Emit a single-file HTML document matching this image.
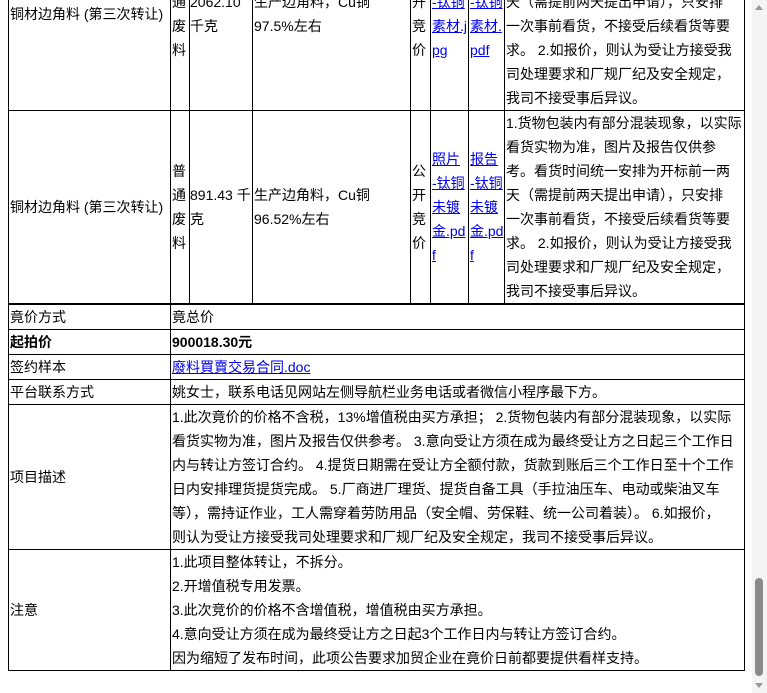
<!DOCTYPE html>
<html><head><meta charset="utf-8"><style>
html,body{margin:0;padding:0;background:#fff;overflow:hidden;width:767px;height:693px;position:relative}
body{font-family:"Liberation Sans","Noto Sans CJK SC",sans-serif;font-size:14px;color:#000}
table{border-collapse:collapse;table-layout:fixed;position:absolute;left:8px}
td{border:1px solid #000;padding:0 1px;line-height:24px;vertical-align:middle;overflow:hidden}
a{color:#00e;text-decoration:underline}
#t1{top:-83px;width:736px}
#t2{top:304px;width:736px}
.nw{white-space:nowrap;padding:0}
.sb{position:absolute;right:0;top:0;width:15px;height:693px;background:#f4f4f4}
.thumb{position:absolute;left:3px;top:578px;width:8px;height:98px;background:#8a8a8a;border-radius:4px}
.up{position:absolute;left:3px;top:5px;width:0;height:0;border-left:4px solid transparent;border-right:4px solid transparent;border-bottom:5px solid #999}
.dn{position:absolute;left:3px;top:683px;width:0;height:0;border-left:4px solid transparent;border-right:4px solid transparent;border-top:5px solid #999}
</style></head><body>
<table id="t1">
<colgroup><col style="width:162px"><col style="width:19px"><col style="width:63px"><col style="width:158px"><col style="width:20px"><col style="width:38px"><col style="width:36px"><col style="width:240px"></colgroup>
<tr style="height:193px"><td>铜材边角料 (第三次转让)</td><td>普<br>通<br>废<br>料</td><td class="nw">2062.10<br>千克</td><td>生产边角料，Cu铜<br>97.5%左右</td><td>公<br>开<br>竞<br>价</td><td><a>照片<br>-钛铜<br>素材.j<br>pg</a></td><td><a>报告<br>-钛铜<br>素材.<br>pdf</a></td><td>1.货物包装内有部分混装现象，以实际<br>看货实物为准，图片及报告仅供参<br>考。看货时间统一安排为开标前一两<br>天（需提前两天提出申请），只安排<br>一次事前看货，不接受后续看货等要<br>求。 2.如报价，则认为受让方接受我<br>司处理要求和厂规厂纪及安全规定，<br>我司不接受事后异议。</td></tr>
<tr style="height:193px"><td>铜材边角料 (第三次转让)</td><td>普<br>通<br>废<br>料</td><td class="nw">891.43 千<br>克</td><td>生产边角料，Cu铜<br>96.52%左右</td><td>公<br>开<br>竞<br>价</td><td><a>照片<br>-钛铜<br>未镀<br>金.pd<br>f</a></td><td><a>报告<br>-钛铜<br>未镀<br>金.pd<br>f</a></td><td>1.货物包装内有部分混装现象，以实际<br>看货实物为准，图片及报告仅供参<br>考。看货时间统一安排为开标前一两<br>天（需提前两天提出申请），只安排<br>一次事前看货，不接受后续看货等要<br>求。 2.如报价，则认为受让方接受我<br>司处理要求和厂规厂纪及安全规定，<br>我司不接受事后异议。</td></tr>
</table>
<table id="t2">
<colgroup><col style="width:162px"><col style="width:574px"></colgroup>
<tr><td>竟价方式</td><td>竟总价</td></tr>
<tr><td><b>起拍价</b></td><td><b>900018.30元</b></td></tr>
<tr><td>签约样本</td><td><a>廢料買賣交易合同.doc</a></td></tr>
<tr><td>平台联系方式</td><td>姚女士，联系电话见网站左侧导航栏业务电话或者微信小程序最下方。</td></tr>
<tr><td>项目描述</td><td>1.此次竟价的价格不含税，13%增值税由买方承担； 2.货物包装内有部分混装现象，以实际<br>看货实物为准，图片及报告仅供参考。 3.意向受让方须在成为最终受让方之日起三个工作日<br>内与转让方签订合约。 4.提货日期需在受让方全额付款，货款到账后三个工作日至十个工作<br>日内安排理货提货完成。 5.厂商进厂理货、提货自备工具（手拉油压车、电动或柴油叉车<br>等），需持证作业，工人需穿着劳防用品（安全帽、劳保鞋、统一公司着装）。 6.如报价，<br>则认为受让方接受我司处理要求和厂规厂纪及安全规定，我司不接受事后异议。</td></tr>
<tr><td>注意</td><td>1.此项目整体转让，不拆分。<br>2.开增值税专用发票。<br>3.此次竞价的价格不含增值税，增值税由买方承担。<br>4.意向受让方须在成为最终受让方之日起3个工作日内与转让方签订合约。<br>因为缩短了发布时间，此项公告要求加贸企业在竟价日前都要提供看样支持。</td></tr>
</table>
<div class="sb"><div class="up"></div><div class="thumb"></div><div class="dn"></div></div>
</body></html>
